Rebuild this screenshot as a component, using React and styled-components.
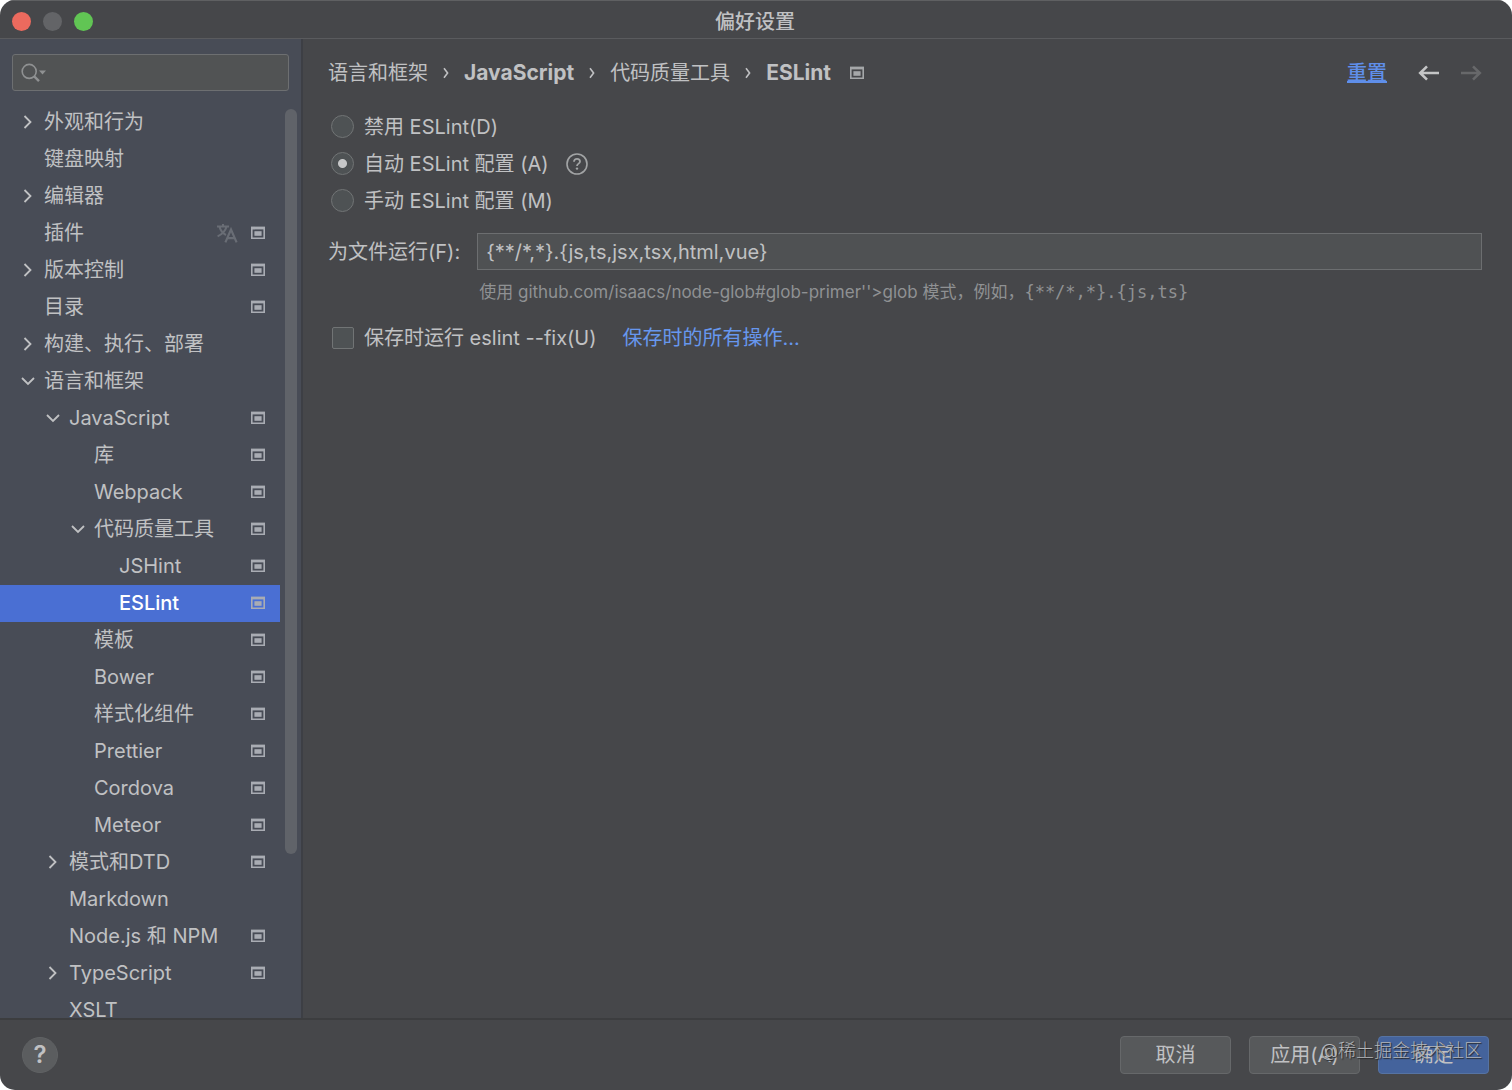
import { useState } from "react";
import styled, { createGlobalStyle, css } from "styled-components";

const tree = [
  { label: "外观和行为", level: 0, arrow: "right" },
  { label: "键盘映射", level: 0 },
  { label: "编辑器", level: 0, arrow: "right" },
  { label: "插件", level: 0, project: true, translate: true },
  { label: "版本控制", level: 0, arrow: "right", project: true },
  { label: "目录", level: 0, project: true },
  { label: "构建、执行、部署", level: 0, arrow: "right" },
  { label: "语言和框架", level: 0, arrow: "down" },
  { label: "JavaScript", level: 1, arrow: "down", project: true },
  { label: "库", level: 2, project: true },
  { label: "Webpack", level: 2, project: true },
  { label: "代码质量工具", level: 2, arrow: "down", project: true },
  { label: "JSHint", level: 3, project: true },
  { label: "ESLint", level: 3, project: true },
  { label: "模板", level: 2, project: true },
  { label: "Bower", level: 2, project: true },
  { label: "样式化组件", level: 2, project: true },
  { label: "Prettier", level: 2, project: true },
  { label: "Cordova", level: 2, project: true },
  { label: "Meteor", level: 2, project: true },
  { label: "模式和DTD", level: 1, arrow: "right", project: true },
  { label: "Markdown", level: 1 },
  { label: "Node.js 和 NPM", level: 1, project: true },
  { label: "TypeScript", level: 1, arrow: "right", project: true },
  { label: "XSLT", level: 1 },
];

const modes = [
  { id: "disabled", label: "禁用 ESLint(D)" },
  { id: "auto", label: "自动 ESLint 配置 (A)", help: true },
  { id: "manual", label: "手动 ESLint 配置 (M)" },
];

const ProjectIcon = () => (
  <svg width="16" height="14" viewBox="0 0 16 14" fill="none">
    <path d="M1.8 1.5h12.4v10.8H1.8z" stroke="currentColor" strokeWidth="1.6" />
    <path d="M1 .8h14v2.6H1z" fill="currentColor" />
    <path d="M4.4 5.2h7.2v4.6H4.4z" fill="currentColor" />
  </svg>
);

const ArrowIcon = ({ direction }) => (
  <svg width="16" height="16" viewBox="0 0 16 16" fill="none">
    <path
      d={direction === "down" ? "M2 5l6 6 6-6" : "M4.5 2l6 6-6 6"}
      stroke="currentColor"
      strokeWidth="1.8"
    />
  </svg>
);

const TranslateIcon = () => (
  <svg width="22" height="20" viewBox="0 0 22 20" fill="none">
    <path
      d="M1 3.6h12M7 1v2.6M10.6 3.6C9.4 8 6 11.4 1.6 13.4M3.4 3.6C4.6 7.6 7.2 10.6 10 12"
      stroke="currentColor"
      strokeWidth="2"
    />
    <path
      d="M9.4 19.4L15 6.6l5.6 12.8M11.4 15.2h7.2"
      stroke="currentColor"
      strokeWidth="2.2"
    />
  </svg>
);

const SearchIcon = () => (
  <svg width="26" height="20" viewBox="0 0 26 20" fill="none">
    <circle cx="8.2" cy="8.4" r="7" stroke="currentColor" strokeWidth="1.6" />
    <path d="M13.2 13.4l4.8 4.8" stroke="currentColor" strokeWidth="2.4" />
    <path d="M18 7.6h7l-3.5 4z" fill="currentColor" />
  </svg>
);

const CrumbArrow = () => (
  <svg width="8" height="14" viewBox="0 0 8 14" fill="none">
    <path d="M2 2.2l3.6 4.8L2 11.8" stroke="currentColor" strokeWidth="1.6" />
  </svg>
);

const NavArrow = ({ forward }) => (
  <svg width="22" height="16" viewBox="0 0 22 16" fill="none">
    <path
      d={forward ? "M1 8h18.6M13 1.4L19.8 8 13 14.6" : "M21 8H2.4M9 1.4L2.2 8 9 14.6"}
      stroke="currentColor"
      strokeWidth="2.6"
    />
  </svg>
);

const HelpIcon = () => (
  <svg width="24" height="24" viewBox="0 0 24 24" fill="none">
    <circle cx="12" cy="12" r="10" stroke="currentColor" strokeWidth="1.6" />
    <path
      d="M9 9.8c0-1.9 1.2-3 3-3s3 1.1 3 2.7c0 2.1-3 2.2-3 4.5"
      stroke="currentColor"
      strokeWidth="1.8"
    />
    <circle cx="12" cy="16.6" r="1.2" fill="currentColor" />
  </svg>
);

const App = () => {
  const [selected, setSelected] = useState("ESLint");
  const [mode, setMode] = useState("auto");
  const [pattern, setPattern] = useState("{**/*,*}.{js,ts,jsx,tsx,html,vue}");
  const [fixOnSave, setFixOnSave] = useState(false);

  return (
    <>
      <GlobalStyle />
      <Window>
        <TitleBar>
          <Lights>
            <Light $color="#ec6a5e" aria-label="关闭" />
            <Light $color="#636467" aria-label="最小化" />
            <Light $color="#61c554" aria-label="缩放" />
          </Lights>
          <Title>偏好设置</Title>
        </TitleBar>

        <Body>
          <Sidebar>
            <SearchBox>
              <SearchIcon />
              <SearchInput type="text" aria-label="搜索" />
            </SearchBox>
            <TreeArea>
              <Tree>
                {tree.map((item) => (
                  <li key={item.label}>
                    <TreeRow
                      $level={item.level}
                      $selected={item.label === selected}
                      onClick={() => setSelected(item.label)}
                    >
                      <ArrowSlot>
                        {item.arrow && <ArrowIcon direction={item.arrow} />}
                      </ArrowSlot>
                      <RowLabel>{item.label}</RowLabel>
                      {item.translate && (
                        <Faded>
                          <TranslateIcon />
                        </Faded>
                      )}
                      {item.project && (
                        <RowIcon>
                          <ProjectIcon />
                        </RowIcon>
                      )}
                    </TreeRow>
                  </li>
                ))}
              </Tree>
              <ScrollTrack>
                <ScrollThumb />
              </ScrollTrack>
            </TreeArea>
          </Sidebar>

          <Main>
            <Header>
              <Crumbs>
                <span>语言和框架</span>
                <CrumbArrow />
                <strong>JavaScript</strong>
                <CrumbArrow />
                <span>代码质量工具</span>
                <CrumbArrow />
                <strong>ESLint</strong>
                <CrumbIcon>
                  <ProjectIcon />
                </CrumbIcon>
              </Crumbs>
              <ResetLink href="#reset">重置</ResetLink>
              <NavButton aria-label="后退">
                <NavArrow />
              </NavButton>
              <NavButton aria-label="前进" disabled>
                <NavArrow forward />
              </NavButton>
            </Header>

            <Modes>
              {modes.map((item) => (
                <OptionRow key={item.id}>
                  <Option>
                    <Radio
                      name="mode"
                      checked={mode === item.id}
                      onChange={() => setMode(item.id)}
                    />
                    {item.label}
                  </Option>
                  {item.help && (
                    <HelpTip aria-label="说明">
                      <HelpIcon />
                    </HelpTip>
                  )}
                </OptionRow>
              ))}
            </Modes>

            <Field>
              <label htmlFor="pattern">为文件运行(F):</label>
              <PatternInput
                id="pattern"
                type="text"
                value={pattern}
                onChange={(e) => setPattern(e.target.value)}
              />
              <Hint>
                使用 github.com/isaacs/node-glob#glob-primer''&gt;glob 模式，例如，
                <code>{"{**/*,*}.{js,ts}"}</code>
              </Hint>
            </Field>

            <OptionRow>
              <Option>
                <Checkbox
                  checked={fixOnSave}
                  onChange={(e) => setFixOnSave(e.target.checked)}
                />
                保存时运行 eslint --fix(U)
              </Option>
              <ActionLink href="#actions">保存时的所有操作...</ActionLink>
            </OptionRow>
          </Main>
        </Body>

        <Footer>
          <HelpButton aria-label="帮助">?</HelpButton>
          <Buttons>
            <Button>取消</Button>
            <Button>应用(A)</Button>
            <Button $primary>确定</Button>
          </Buttons>
          <Watermark>@稀土掘金技术社区</Watermark>
        </Footer>
      </Window>
    </>
  );
};

export default App;

const GlobalStyle = createGlobalStyle`
  * {
    box-sizing: border-box;
  }
  body {
    margin: 0;
    background: #fff;
  }
  body, button, input {
    font-family: Inter, "Noto Sans CJK SC", sans-serif;
    font-size: 20px;
    line-height: 24px;
    color: #c0c1c3;
  }
  button {
    padding: 0;
    border: none;
    background: none;
    cursor: pointer;
  }
  svg {
    display: block;
    flex-shrink: 0;
  }
`;

const Window = styled.div`
  display: flex;
  flex-direction: column;
  height: 100vh;
  border-radius: 15px;
  overflow: hidden;
  background: #46474a;
`;

const TitleBar = styled.header`
  display: grid;
  grid-template-columns: 1fr auto 1fr;
  align-items: center;
  height: 39px;
  flex-shrink: 0;
  padding: 4px 14px 0 12px;
  border-top: 1px solid #5f6062;
  border-bottom: 1px solid #5a5b5e;
`;

const Lights = styled.div`
  display: flex;
  gap: 12px;
`;

const Light = styled.button`
  width: 19px;
  height: 19px;
  border-radius: 50%;
  background: ${(props) => props.$color};
`;

const Title = styled.h1`
  margin: 0;
  font-size: 20px;
  line-height: 24px;
  font-weight: 500;
`;

const Body = styled.div`
  display: flex;
  flex: 1;
  min-height: 0;
`;

const Sidebar = styled.aside`
  display: flex;
  flex-direction: column;
  width: 303px;
  flex-shrink: 0;
  padding-top: 15px;
  background: #484c56;
  border-right: 2px solid #3d3f45;
`;

const SearchBox = styled.div`
  display: flex;
  align-items: center;
  height: 37px;
  flex-shrink: 0;
  margin: 0 12px 13px;
  padding: 0 8px;
  gap: 6px;
  color: #8f9192;
  background: #515354;
  border: 1px solid #6d6f71;
  border-radius: 3px;
`;

const SearchInput = styled.input`
  flex: 1;
  min-width: 0;
  border: none;
  outline: none;
  background: none;
`;

const TreeArea = styled.div`
  display: flex;
  flex: 1;
  min-height: 0;
  overflow: hidden;
`;

const Tree = styled.ul`
  flex: 1;
  margin: 0;
  padding: 0;
  list-style: none;
`;

const TreeRow = styled.button`
  display: flex;
  align-items: center;
  gap: 8px;
  width: 100%;
  height: 37px;
  padding-bottom: 2px;
  padding-left: ${(props) => 20 + props.$level * 25}px;
  padding-right: 14px;
  text-align: left;
  white-space: nowrap;
  ${(props) =>
    props.$selected &&
    css`
      color: #fff;
      font-weight: 500;
      background: #4a6fd3;
    `}
`;

const ArrowSlot = styled.span`
  width: 16px;
  flex-shrink: 0;
`;

const RowLabel = styled.span`
  flex: 1;
`;

const RowIcon = styled.span`
  color: #a9acb3;
`;

const Faded = styled.span`
  margin-right: 4px;
  color: #696d75;
`;

const ScrollTrack = styled.div`
  width: 21px;
  padding: 5px 4px 0 5px;
`;

const ScrollThumb = styled.div`
  height: 82%;
  border-radius: 6px;
  background: #606369;
`;

const Main = styled.main`
  flex: 1;
  min-width: 0;
  padding: 17px 30px 0 25px;
  white-space: nowrap;
`;

const Header = styled.div`
  display: flex;
  align-items: center;
  height: 34px;
  margin-bottom: 18px;
`;

const Crumbs = styled.nav`
  display: flex;
  align-items: center;
  flex: 1;
  gap: 14px;
  strong {
    font-size: 21px;
    font-weight: 700;
  }
`;

const CrumbIcon = styled.span`
  margin-left: 4px;
  color: #a5a7a9;
`;

const ResetLink = styled.a`
  margin-right: 11px;
  color: #5f8fea;
  font-weight: 500;
  text-underline-offset: 1px;
`;

const NavButton = styled.button`
  margin-left: 20px;
  color: #c4c5c6;
  &:disabled {
    color: #67686a;
  }
`;

const Modes = styled.div`
  margin-bottom: 14px;
`;

const OptionRow = styled.div`
  display: flex;
  align-items: center;
  height: 37px;
`;

const Option = styled.label`
  display: flex;
  align-items: center;
  gap: 10px;
`;

const Radio = styled.input.attrs({ type: "radio" })`
  appearance: none;
  width: 23px;
  height: 23px;
  margin: 0 0 0 3px;
  border: 1px solid #717475;
  border-radius: 50%;
  background: #4e5254;
  &:checked {
    background: radial-gradient(circle, #c6c7c8 0 4px, #4e5254 5px);
  }
`;

const Checkbox = styled.input.attrs({ type: "checkbox" })`
  appearance: none;
  width: 22px;
  height: 22px;
  margin: 0 0 0 4px;
  border: 1px solid #717475;
  border-radius: 2px;
  background: #4e5254;
  &:checked {
    background: #5f8fea;
  }
`;

const HelpTip = styled.button`
  margin-left: 16px;
  color: #a2a4a5;
`;

const Field = styled.div`
  display: grid;
  grid-template-columns: auto 1fr;
  align-items: center;
  column-gap: 17px;
  margin-bottom: 15px;
`;

const PatternInput = styled.input`
  width: 100%;
  height: 37px;
  padding: 0 8px;
  border: 1px solid #6c6e70;
  outline: none;
  background: #4f5153;
`;

const Hint = styled.div`
  grid-column: 2;
  margin-top: 10px;
  padding-left: 2px;
  font-size: 17px;
  line-height: 24px;
  color: #8f9193;
  code {
    font-family: "DejaVu Sans Mono", monospace;
    font-size: 17px;
  }
`;

const ActionLink = styled.a`
  margin-left: 26px;
  color: #6797ee;
  text-decoration: none;
`;

const Footer = styled.footer`
  position: relative;
  display: flex;
  align-items: center;
  justify-content: space-between;
  height: 72px;
  flex-shrink: 0;
  padding: 0 23px 0 22px;
  border-top: 2px solid #3c3d3f;
`;

const HelpButton = styled.button`
  width: 36px;
  height: 36px;
  border: 1px solid #606264;
  border-radius: 50%;
  background: #5b5d5f;
  font-size: 24px;
  font-weight: 600;
  line-height: 32px;
`;

const Buttons = styled.div`
  display: flex;
  gap: 18px;
`;

const Button = styled.button`
  min-width: 111px;
  height: 38px;
  border: 1px solid ${(props) => (props.$primary ? "#5673a3" : "#66686a")};
  border-radius: 4px;
  background: ${(props) => (props.$primary ? "#44639c" : "#57595b")};
`;

/* sits over the dialog buttons */
const Watermark = styled.span`
  position: absolute;
  right: 30px;
  top: 19px;
  font-size: 18px;
  line-height: 24px;
  font-weight: 300;
  color: #b4b6b9;
  text-shadow: 1px 1px 1px #222;
  pointer-events: none;
`;
